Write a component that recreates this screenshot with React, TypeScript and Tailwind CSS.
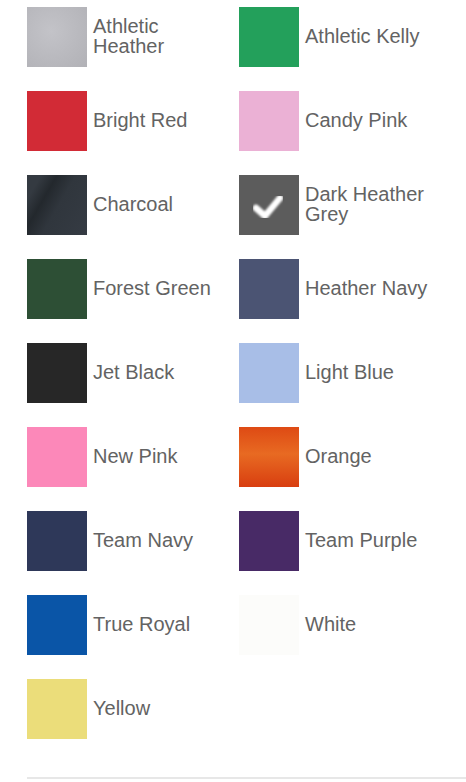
const colors: { name: string; bg: string; checked?: boolean }[] = [
  { name: "Athletic Heather", bg: "bg-[radial-gradient(circle_at_40%_40%,#c3c3c8,#b1b1b6)]" },
  { name: "Athletic Kelly", bg: "bg-[#23a05b]" },
  { name: "Bright Red", bg: "bg-[#d22b36]" },
  { name: "Candy Pink", bg: "bg-[#ebb1d5]" },
  { name: "Charcoal", bg: "bg-[linear-gradient(120deg,#343a41_15%,#23282d_32%,#30363d_52%,#353b43)]" },
  { name: "Dark Heather Grey", bg: "bg-[#5c5c5c]", checked: true },
  { name: "Forest Green", bg: "bg-[#2d4f35]" },
  { name: "Heather Navy", bg: "bg-[#4b5473]" },
  { name: "Jet Black", bg: "bg-[#272727]" },
  { name: "Light Blue", bg: "bg-[#a8bee7]" },
  { name: "New Pink", bg: "bg-[#fc88b9]" },
  { name: "Orange", bg: "bg-[linear-gradient(180deg,#de4a14,#e86a22_45%,#d83e10)]" },
  { name: "Team Navy", bg: "bg-[#2e3859]" },
  { name: "Team Purple", bg: "bg-[#482a66]" },
  { name: "True Royal", bg: "bg-[#0a55a7]" },
  { name: "White", bg: "bg-[#fcfcfa]" },
  { name: "Yellow", bg: "bg-[#ebdd7a]" },
];

function Check() {
  return (
    <svg viewBox="0 0 60 60" className="h-full w-full">
      <defs>
        <filter id="soft">
          <feGaussianBlur stdDeviation="0.8" />
        </filter>
      </defs>
      <polyline
        points="17,33 26,41 41,23"
        fill="none"
        stroke="#ffffff"
        strokeWidth="6.5"
        strokeLinecap="round"
        strokeLinejoin="round"
        filter="url(#soft)"
      />
    </svg>
  );
}

export default function App() {
  return (
    <div className="min-h-[782px] bg-white font-['Liberation_Sans',Arial,sans-serif]">
      <div className="grid grid-cols-[212px_1fr] gap-y-6 pl-[27px] pt-[7px]">
        {colors.map((c) => (
          <div key={c.name} className="flex items-center gap-[6px]">
            <div className={`h-[60px] w-[60px] shrink-0 ${c.bg}`}>
              {c.checked && <Check />}
            </div>
            <span className="w-[130px] pb-[2px] text-[20px] leading-[20px] text-[#636363]">
              {c.name}
            </span>
          </div>
        ))}
      </div>
      <div className="ml-[27px] mt-[38px] h-[2px] bg-[#e7e7e7]" />
    </div>
  );
}
